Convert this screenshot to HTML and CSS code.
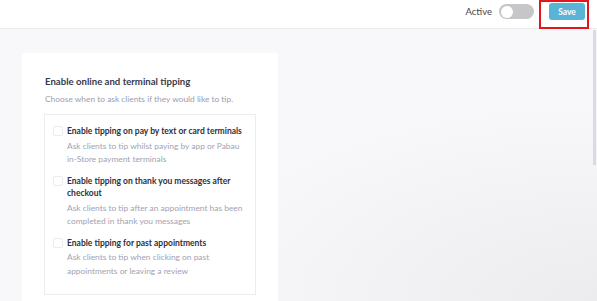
FILE: index.html
```html
<!DOCTYPE html>
<html lang="en">
  <head>
    <meta charset="UTF-8" />
    <meta name="viewport" content="width=device-width, initial-scale=1.0" />
    <title>Tipping settings</title>
    <link rel="stylesheet" href="styles.css">
  </head>
  <body>
    <div class="header">
      <span class="status-label">Active</span>
      <div class="toggle"><div class="knob"></div></div>
      <div class="highlight">
        <button class="save-btn">Save</button>
      </div>
    </div>

    <div class="content">
      <div class="card">
        <h2 class="card-title">Enable online and terminal tipping</h2>
        <p class="card-sub">Choose when to ask clients if they would like to tip.</p>

        <div class="options">
          <div class="option">
            <span class="check"></span>
            <div class="option-text">
              <div class="option-title">Enable tipping on pay by text or card terminals</div>
              <div class="option-desc">Ask clients to tip whilst paying by app or Pabau in-Store payment terminals</div>
            </div>
          </div>
          <div class="option">
            <span class="check"></span>
            <div class="option-text">
              <div class="option-title">Enable tipping on thank you messages after checkout</div>
              <div class="option-desc">Ask clients to tip after an appointment has been completed in thank you messages</div>
            </div>
          </div>
          <div class="option">
            <span class="check"></span>
            <div class="option-text">
              <div class="option-title">Enable tipping for past appointments</div>
              <div class="option-desc">Ask clients to tip when clicking on past appointments or leaving a review</div>
            </div>
          </div>
        </div>
      </div>
    </div>

    <div class="scrollbar"></div>
  </body>
</html>
```

FILE: styles.css
```css
body {
  font-family: Lato, "Noto Sans", sans-serif;
  margin: 0;
  height: 301px;
  overflow: hidden;
  background: #f8f8fa;
  background-image: radial-gradient(ellipse 420px 200px at 100% 100%, #ececef 0%, #f8f8fa 100%);
}

.header {
  box-sizing: border-box;
  height: 29px;
  background: #fff;
  border-bottom: 1px solid #ebebef;
  display: flex;
  align-items: center;
  justify-content: flex-end;
  padding: 0 8px 5px 0;
}

.status-label {
  font-size: 9.5px;
  color: #44444f;
  margin-right: 7px;
}

.toggle {
  width: 35px;
  height: 15px;
  border-radius: 8px;
  background: #c6c6c8;
  position: relative;
  margin-right: 5px;
}

.knob {
  position: absolute;
  left: 1.5px;
  top: 1.5px;
  width: 12px;
  height: 12px;
  border-radius: 50%;
  background: #fff;
}

.highlight {
  box-sizing: border-box;
  width: 50px;
  height: 29px;
  border: 2px solid #e3161e;
  display: flex;
  align-items: center;
  padding-left: 8px;
  align-self: flex-start;
}

.save-btn {
  width: 36px;
  height: 17px;
  padding: 0;
  border: none;
  border-radius: 3px;
  background: #5ab4d6;
  color: #fff;
  font-family: inherit;
  font-size: 8.5px;
  font-weight: 700;
  margin-top: -6px;
}

.content {
  padding: 24px 22px 0;
}

.card {
  width: 256px;
  box-sizing: border-box;
  background: #fff;
  border-radius: 4px;
  padding: 21px 22px 20px;
}

.card-title {
  margin: 0;
  font-size: 9.6px;
  line-height: 16px;
  font-weight: 700;
  color: #3a3a4a;
  padding-left: 1px;
}

.card-sub {
  margin: 2px 0 8px;
  font-size: 8.4px;
  line-height: 14px;
  color: #9c9cae;
  padding-left: 1px;
}

.options {
  border: 1px solid #ededf0;
  padding: 10px 8px 8px;
}

.option {
  display: flex;
  align-items: flex-start;
  margin-bottom: 8px;
}

.check {
  flex: none;
  width: 8px;
  height: 8px;
  border: 1px solid #ececf0;
  border-radius: 2px;
  margin-top: 1px;
  margin-right: 4px;
}

.option-title {
  font-size: 8.5px;
  line-height: 12.5px;
  font-weight: 700;
  color: #30303c;
}

.option-desc {
  margin-top: 2px;
  font-size: 8.4px;
  line-height: 13.5px;
  color: #a2a2b2;
}

.scrollbar {
  position: absolute;
  left: 593px;
  top: 30px;
  width: 3px;
  height: 135px;
  background: #d6dbe4;
}
```
